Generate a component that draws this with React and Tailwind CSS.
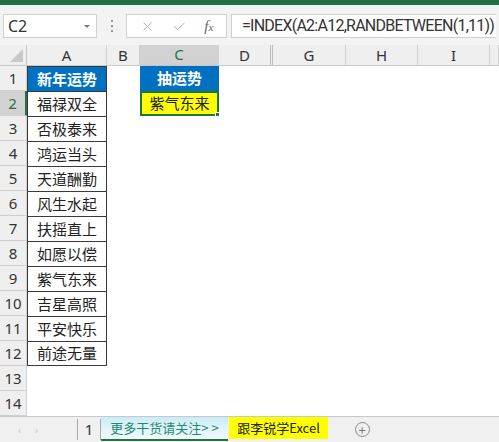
import { X, Check } from 'lucide-react';

const cjk = { fontFamily: '"Noto Sans CJK SC", "Noto Sans", sans-serif' };
const ui = { fontFamily: '"Noto Sans", "Noto Sans CJK SC", sans-serif' };

const items = ['福禄双全', '否极泰来', '鸿运当头', '天道酬勤', '风生水起', '扶摇直上', '如愿以偿', '紫气东来', '吉星高照', '平安快乐', '前途无量'];

const cols = [
  { key: 'A', w: 'w-[80px]' },
  { key: 'B', w: 'w-[33px]' },
  { key: 'C', w: 'w-[79px]' },
  { key: 'D', w: 'w-[54px]' },
  { key: 'G', w: 'w-[73px]' },
  { key: 'H', w: 'w-[72px]' },
  { key: 'I', w: 'w-[72px]' },
  { key: '', w: 'flex-1' },
];

function FormulaBar() {
  return (
    <div className="h-[45px] bg-[#f3f3f3] border-t-[5px] border-[#1e7145] flex items-center pt-[2px] px-[3px]">
      <div className="w-[94px] shrink-0 h-[24px] bg-white border border-[#d0d0d0] flex items-center justify-between pl-[4px] pr-[6px]">
        <span className="text-[16px] text-[#333]" style={ui}>C2</span>
        <span className="w-0 h-0 border-l-[3px] border-r-[3px] border-t-[3px] border-l-transparent border-r-transparent border-t-[#777]" />
      </div>
      <div className="w-[29px] shrink-0 flex flex-col items-center gap-[3px]">
        <span className="w-[2px] h-[2px] bg-[#999]" />
        <span className="w-[2px] h-[2px] bg-[#999]" />
        <span className="w-[2px] h-[2px] bg-[#999]" />
      </div>
      <div className="w-[101px] shrink-0 h-[24px] bg-white border border-[#d0d0d0] flex items-center justify-around px-[4px] text-[#b0b0b0]">
        <X size={15} strokeWidth={1.5} />
        <Check size={15} strokeWidth={1.5} />
        <span className="text-[15px] italic text-[#666]" style={{ fontFamily: '"Liberation Serif", serif' }}>
          f<span className="text-[11px]">x</span>
        </span>
      </div>
      <div
        className="ml-[4px] min-w-0 flex-1 h-[24px] bg-white border border-[#d0d0d0] border-r-0 flex items-center pl-[10px] text-[16px] text-[#333] tracking-[-0.75px] whitespace-nowrap overflow-hidden"
        style={{ fontFamily: 'Roboto, "Liberation Sans", sans-serif' }}
      >
        =INDEX(A2:A12,RANDBETWEEN(1,11))
      </div>
    </div>
  );
}

function HeaderRow() {
  return (
    <div className="flex h-[21px] bg-[#efefef] border-b border-[#c8c8c8]" style={ui}>
      <div className="w-[27px] h-full border-r border-[#c8c8c8] relative">
        <span className="absolute right-[3px] bottom-[3px] w-0 h-0 border-b-[13px] border-l-[13px] border-b-[#c8c8c8] border-l-transparent" />
      </div>
      {cols.map((c) => {
        const sel = c.key === 'C';
        return (
          <div
            key={c.key || 'x'}
            className={`${c.w} h-full flex items-center justify-center text-[15px] ${
              sel ? 'bg-[#d2d2d2] text-[#217346] border-b-2 border-[#217346]' : 'text-[#333]'
            } ${c.key === 'D' ? 'border-r-[3px] border-double border-[#bdbdbd]' : 'border-r border-[#d0d0d0]'}`}
          >
            {c.key}
          </div>
        );
      })}
    </div>
  );
}

function Row({ n }) {
  const selRow = n === 2;
  let aCell = null;
  let cCell = null;
  if (n === 1) {
    aCell = (
      <div className="w-[80px] h-full bg-[#0070c0] text-white font-bold flex items-center justify-center text-[15px] border border-b-0 border-[#3a3a3a]">
        新年运势
      </div>
    );
    cCell = (
      <div className="w-[79px] h-full bg-[#0070c0] text-white font-bold flex items-center justify-center text-[15px]">
        抽运势
      </div>
    );
  } else if (n <= 12) {
    aCell = (
      <div className={`w-[80px] h-full bg-white text-[#222] flex items-center justify-center text-[15px] border-l border-r border-t border-[#3a3a3a] ${n === 12 ? 'border-b' : ''}`}>
        {items[n - 2]}
      </div>
    );
  }
  if (n === 2) {
    cCell = (
      <div className="w-[79px] h-full relative bg-[#ffff00] text-[#222] flex items-center justify-center text-[15px] border-2 border-[#217346]">
        紫气东来
        <span className="absolute -right-[3px] -bottom-[3px] w-[5px] h-[5px] bg-[#217346] border border-white" />
      </div>
    );
  }
  return (
    <div className="flex h-[25px]" style={cjk}>
      <div
        className={`w-[27px] h-full flex items-center justify-center text-[15px] border-r border-b border-[#d0d0d0] ${
          selRow ? 'bg-[#d2d2d2] text-[#217346] border-r-2 border-r-[#217346]' : 'bg-[#efefef] text-[#333]'
        }`}
        style={ui}
      >
        {n}
      </div>
      {aCell ? aCell : <div className="w-[80px] h-full" />}
      <div className="w-[33px] h-full" />
      {cCell ? cCell : <div className="w-[79px] h-full" />}
      <div className="flex-1 h-full" />
    </div>
  );
}

function TabBar() {
  return (
    <div className="h-[26px] bg-[#f0f0f0] border-t border-[#c8c8c8] flex items-stretch text-[13px]" style={cjk}>
      <div className="w-[77px] flex items-center gap-[14px] pl-[18px] text-[#c0c0c0] text-[10px]">
        <span>‹</span>
        <span>›</span>
      </div>
      <div className="w-[24px] border-l border-r border-[#aaa] my-[2px] flex items-center justify-center text-[#333] text-[15px]" style={ui}>
        1
      </div>
      <div className="w-[127px] flex items-center justify-center bg-gradient-to-b from-[#c9ecf7] to-[#f4fbfd] text-[#1e8a6a] border-b-2 border-[#217346] mb-[1px]">
        更多干货请关注&gt; &gt;
      </div>
      <div className="w-[99px] ml-[1px] flex items-center justify-center bg-[#ffff00] text-[#222] mb-[3px]">
        跟李锐学Excel
      </div>
      <div className="w-[68px] flex items-center justify-center">
        <span className="w-[15px] h-[15px] rounded-full border border-[#888] flex items-center justify-center text-[#777] text-[13px] leading-none">+</span>
      </div>
    </div>
  );
}

export default function App() {
  const rows = Array.from({ length: 14 }, (_, i) => i + 1);
  return (
    <div className="w-[499px] h-[442px] overflow-hidden bg-white flex flex-col">
      <FormulaBar />
      <HeaderRow />
      <div className="flex-1 flex flex-col">
        {rows.map((n) => (
          <Row key={n} n={n} />
        ))}
      </div>
      <TabBar />
    </div>
  );
}
